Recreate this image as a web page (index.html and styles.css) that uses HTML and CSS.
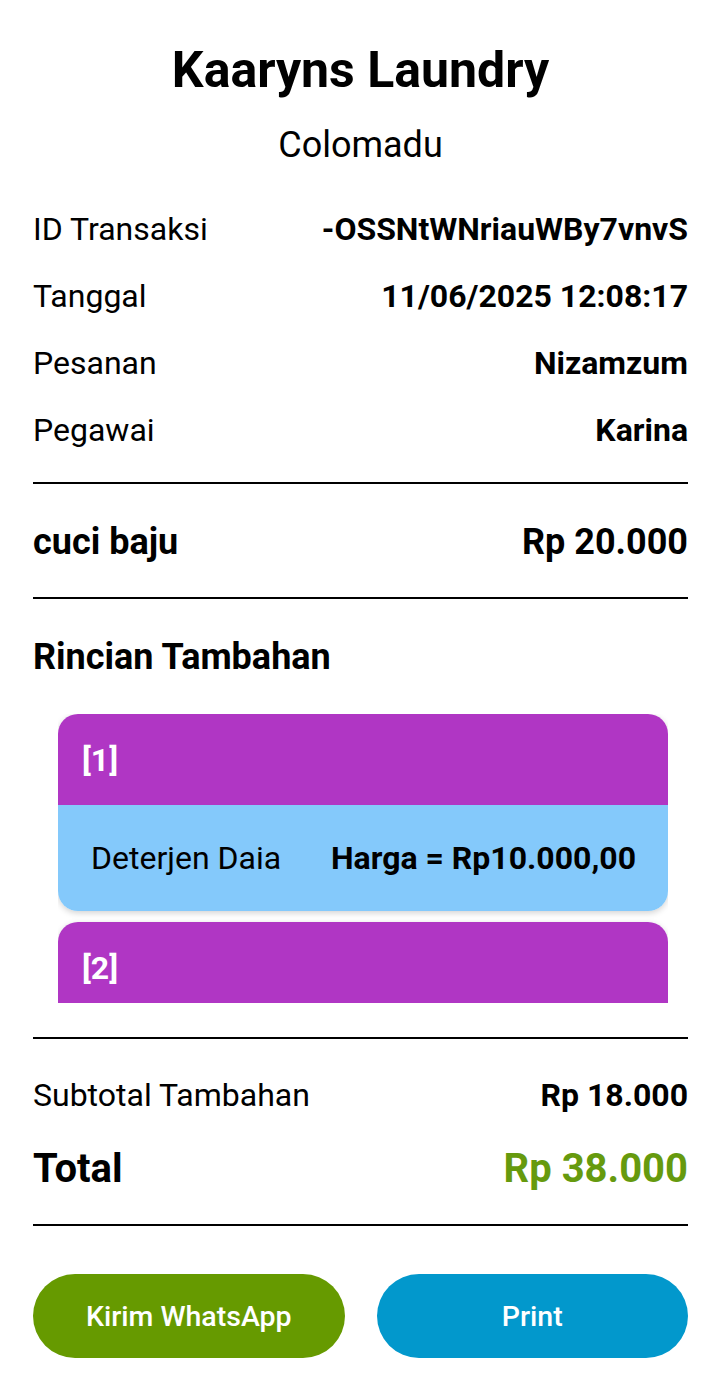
FILE: index.html
```html
<!DOCTYPE html>
<html lang="id">
<head>
<meta charset="utf-8">
<title>Kaaryns Laundry</title>
<link rel="stylesheet" href="styles.css">
</head>
<body>
<main class="receipt">
  <header class="shop">
    <h1 class="shop-name">Kaaryns Laundry</h1>
    <p class="shop-branch">Colomadu</p>
  </header>

  <section class="info">
    <div class="info-row"><span class="label">ID Transaksi</span><span class="value">-OSSNtWNriauWBy7vnvS</span></div>
    <div class="info-row"><span class="label">Tanggal</span><span class="value">11/06/2025 12:08:17</span></div>
    <div class="info-row"><span class="label">Pesanan</span><span class="value">Nizamzum</span></div>
    <div class="info-row"><span class="label">Pegawai</span><span class="value">Karina</span></div>
  </section>

  <hr class="divider">

  <div class="service-row"><span>cuci baju</span><span>Rp 20.000</span></div>

  <hr class="divider">

  <h2 class="section-title">Rincian Tambahan</h2>

  <div class="extras">
    <div class="extra-card">
      <div class="extra-head">[1]</div>
      <div class="extra-body"><span class="extra-name">Deterjen Daia</span><span class="extra-price">Harga = Rp10.000,00</span></div>
    </div>
    <div class="extra-card">
      <div class="extra-head">[2]</div>
      <div class="extra-body"></div>
    </div>
  </div>

  <hr class="divider divider-extras">

  <div class="sum-row"><span class="label">Subtotal Tambahan</span><span class="value">Rp 18.000</span></div>
  <div class="total-row"><span>Total</span><span class="total-value">Rp 38.000</span></div>

  <hr class="divider">

  <div class="actions">
    <button class="btn btn-wa">Kirim WhatsApp</button>
    <button class="btn btn-print">Print</button>
  </div>
</main>
</body>
</html>
```
FILE: styles.css
```css
* { box-sizing: border-box; }

html, body {
  margin: 0;
  padding: 0;
  background: #ffffff;
}

body {
  font-family: Roboto, "Liberation Sans", sans-serif;
  color: #000000;
}

.receipt {
  padding: 42px 32px 0 33px;
  display: flex;
  flex-direction: column;
}

.shop {
  display: flex;
  flex-direction: column;
  align-items: center;
}

.shop-name {
  margin: 0;
  font-size: 50px;
  line-height: 56px;
  font-weight: 700;
}

.shop-branch {
  margin: 27px 0 0;
  font-size: 36px;
  line-height: 40px;
  font-weight: 400;
}

.info {
  margin-top: 30px;
  display: flex;
  flex-direction: column;
}

.info-row, .sum-row {
  height: 67px;
  display: flex;
  align-items: center;
  justify-content: space-between;
  font-size: 32px;
}

.label { font-weight: 400; }
.value { font-weight: 700; }

.divider {
  margin: 19px 0 0;
  border: 0;
  border-top: 2px solid #000;
  height: 0;
}

.service-row {
  height: 113px;
  padding-top: 3px;
  display: flex;
  align-items: center;
  justify-content: space-between;
  font-size: 36px;
  font-weight: 700;
}

.service-row + .divider { margin-top: 0; }

.section-title {
  margin: 38px 0 0;
  font-size: 36px;
  line-height: 40px;
  font-weight: 700;
}

.extras {
  margin: 37px 20px 0 25px;
  height: 289px;
  overflow: hidden;
  display: flex;
  flex-direction: column;
  gap: 11px;
}

.extra-card {
  flex: none;
  border-radius: 20px;
  overflow: hidden;
  box-shadow: 0 2px 6px rgba(0, 0, 0, 0.18);
}

.extra-head {
  height: 91px;
  background: #b036c4;
  color: #ffffff;
  font-size: 32px;
  font-weight: 700;
  display: flex;
  align-items: center;
  padding-left: 24px;
}

.extra-body {
  height: 106px;
  background: #84c9fb;
  display: flex;
  align-items: center;
  justify-content: space-between;
  padding: 0 32px 0 33px;
  font-size: 32px;
}

.extra-price { font-weight: 700; }

.divider-extras { margin-top: 34px; }

.sum-row {
  margin-top: 22px;
}

.total-row {
  height: 80px;
  display: flex;
  align-items: center;
  justify-content: space-between;
  font-size: 40px;
  font-weight: 700;
}

.total-value { color: #669a0e; }

.total-row + .divider { margin-top: 16px; }

.actions {
  margin-top: 48px;
  display: flex;
  gap: 32px;
}

.btn {
  flex: 1;
  height: 84px;
  border: 0;
  border-radius: 42px;
  color: #ffffff;
  font-family: Roboto, "Liberation Sans", sans-serif;
  font-size: 28.5px;
  font-weight: 500;
}

.btn-wa { background: #669a00; }
.btn-print { background: #0298cc; }
```
